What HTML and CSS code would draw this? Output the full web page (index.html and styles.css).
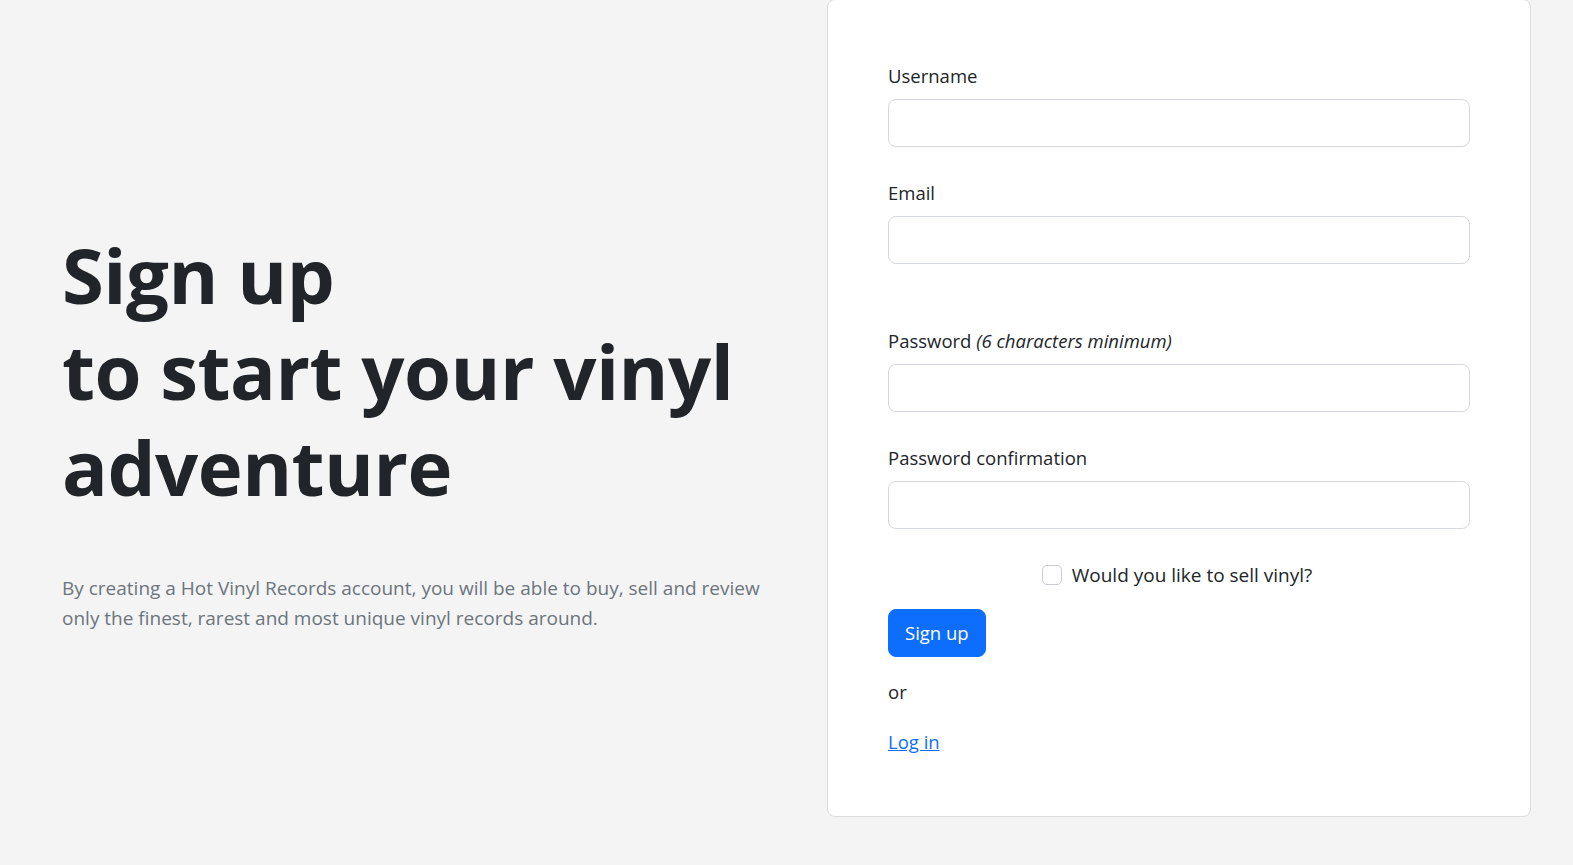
FILE: index.html
```html
<!DOCTYPE html>
<html lang="en">
<head>
<meta charset="utf-8">
<title>Sign up - Hot Vinyl Records</title>
<link rel="stylesheet" href="styles.css">
</head>
<body>
<main class="page">
  <section class="intro">
    <h1 class="intro-title">Sign up<br>to start your vinyl<br>adventure</h1>
    <p class="intro-lead">By creating a Hot Vinyl Records account, you will be able to buy, sell and review<br>only the finest, rarest and most unique vinyl records around.</p>
  </section>
  <section class="card">
    <form class="signup-form">
      <div class="field">
        <label class="field-label" for="username">Username</label>
        <input class="field-input" id="username" type="text">
      </div>
      <div class="field field-spaced">
        <label class="field-label" for="email">Email</label>
        <input class="field-input" id="email" type="email">
      </div>
      <div class="field">
        <label class="field-label" for="password">Password <em>(6 characters minimum)</em></label>
        <input class="field-input" id="password" type="password">
      </div>
      <div class="field">
        <label class="field-label" for="password_confirmation">Password confirmation</label>
        <input class="field-input" id="password_confirmation" type="password">
      </div>
      <div class="check-row">
        <input class="check-input" id="seller" type="checkbox">
        <label class="check-label" for="seller">Would you like to sell vinyl?</label>
      </div>
      <div class="actions">
        <button class="btn-primary" type="button">Sign up</button>
      </div>
      <p class="or-text">or</p>
      <p class="login-line"><a class="login-link" href="#">Log in</a></p>
    </form>
  </section>
</main>
</body>
</html>
```
FILE: styles.css
```css
* { box-sizing: border-box; }

html, body {
  margin: 0;
  padding: 0;
  height: 100%;
}

body {
  background: #f4f4f4;
  color: #212529;
  font-family: "Open Sans", "Noto Sans", "Liberation Sans", sans-serif;
  font-size: 18.5px;
  line-height: 30px;
  overflow: hidden;
}

.page {
  display: flex;
  align-items: flex-start;
}

.intro {
  flex: 1;
  padding: 227px 0 0 62px;
}

.intro-title {
  margin: 0;
  font-size: 76px;
  line-height: 96px;
  font-weight: 700;
  letter-spacing: -0.5px;
  color: #212529;
}

.intro-lead {
  margin: 58px 0 0;
  font-size: 19px;
  line-height: 30px;
  font-weight: 400;
  color: #6c757d;
}

.card {
  width: 704px;
  margin: -1px 42px 0 0;
  background: #fff;
  border: 1px solid #dcdcdc;
  border-radius: 8px;
  padding: 61px 60px 59px;
}

.signup-form {
  display: flex;
  flex-direction: column;
}

.field {
  display: flex;
  flex-direction: column;
  margin-bottom: 31px;
}

.field-spaced {
  margin-bottom: 62px;
}

.field-label {
  display: block;
  margin-bottom: 8px;
  line-height: 30px;
}

.field-label em {
  font-style: italic;
}

.field-input {
  display: block;
  width: 100%;
  height: 48px;
  border: 1px solid #d5d8dc;
  border-radius: 8px;
  background: #fff;
  font: inherit;
  padding: 8px 16px;
}

.check-row {
  display: flex;
  align-items: center;
  justify-content: center;
  height: 30px;
  padding-right: 4px;
}

.check-input {
  appearance: none;
  -webkit-appearance: none;
  width: 20px;
  height: 20px;
  margin: 0 10px 0 0;
  border: 1px solid #c9ccd0;
  border-radius: 5px;
  background: #fff;
}

.check-label {
  line-height: 30px;
  font-size: 19px;
}

.actions {
  margin-top: 19px;
}

.btn-primary {
  display: inline-block;
  height: 48px;
  padding: 0 16px;
  border: 1px solid #0d6efd;
  border-radius: 8px;
  background: #0d6efd;
  color: #fff;
  font: inherit;
  line-height: 46px;
}

.or-text {
  margin: 20px 0 0;
  line-height: 30px;
}

.login-line {
  margin: 20px 0 0;
  line-height: 30px;
}

.login-link {
  color: #0d6efd;
  text-decoration: underline;
}
```
